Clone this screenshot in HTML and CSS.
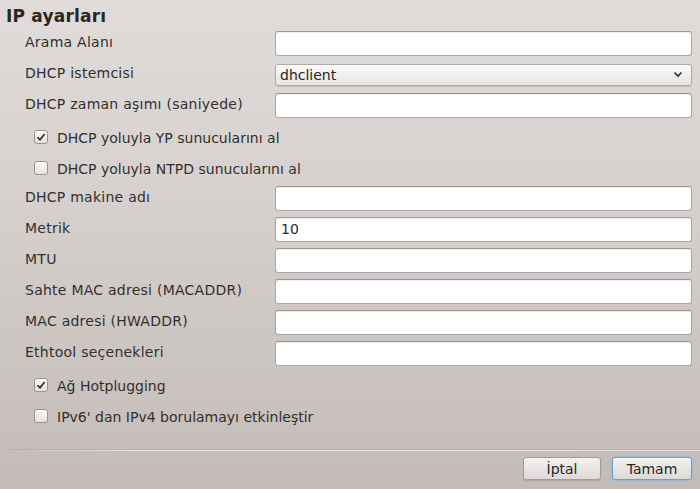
FILE: index.html
```html
<!DOCTYPE html>
<html lang="tr">
<head>
<meta charset="utf-8">
<title>IP ayarları</title>
<link rel="stylesheet" href="styles.css">
</head>
<body>
<div class="window">
  <h1 class="title">IP ayarları</h1>
  <div class="form">
    <div class="row"><span class="label">Arama Alanı</span><span class="field"></span></div>
    <div class="row"><span class="label">DHCP istemcisi</span>
      <span class="combo"><span class="combo-text">dhclient</span>
        <svg class="chev" width="10" height="7" viewBox="0 0 10 7"><path d="M1.5 1.5 L5 5 L8.5 1.5" fill="none" stroke="#2e2a28" stroke-width="1.6"/></svg>
      </span>
    </div>
    <div class="row"><span class="label">DHCP zaman aşımı (saniyede)</span><span class="field"></span></div>
    <div class="row check-row"><span class="box checked"><svg width="14" height="14" viewBox="0 0 14 14"><path d="M3.5 7.2 L6 9.8 L10.6 4" fill="none" stroke="#2b2725" stroke-width="1.6"/></svg></span><span class="check-label">DHCP yoluyla YP sunucularını al</span></div>
    <div class="row check-row"><span class="box"></span><span class="check-label">DHCP yoluyla NTPD sunucularını al</span></div>
    <div class="row"><span class="label">DHCP makine adı</span><span class="field"></span></div>
    <div class="row"><span class="label">Metrik</span><span class="field">10</span></div>
    <div class="row"><span class="label">MTU</span><span class="field"></span></div>
    <div class="row"><span class="label">Sahte MAC adresi (MACADDR)</span><span class="field"></span></div>
    <div class="row"><span class="label">MAC adresi (HWADDR)</span><span class="field"></span></div>
    <div class="row"><span class="label">Ethtool seçenekleri</span><span class="field"></span></div>
    <div class="row check-row"><span class="box checked"><svg width="14" height="14" viewBox="0 0 14 14"><path d="M3.5 7.2 L6 9.8 L10.6 4" fill="none" stroke="#2b2725" stroke-width="1.6"/></svg></span><span class="check-label">Ağ Hotplugging</span></div>
    <div class="row check-row"><span class="box"></span><span class="check-label">IPv6' dan IPv4 borulamayı etkinleştir</span></div>
  </div>
  <div class="sep"></div>
  <div class="buttons">
    <span class="btn">İptal</span>
    <span class="btn default">Tamam</span>
  </div>
</div>
</body>
</html>
```
FILE: styles.css
```css
html, body {
  margin: 0;
  padding: 0;
}
body {
  width: 700px;
  height: 489px;
  overflow: hidden;
  font-family: "DejaVu Sans", sans-serif;
  font-size: 14px;
  color: #332f2d;
  background: linear-gradient(to bottom, #dfdcda 0%, #d6d1ce 40%, #c3bbb8 100%);
}
.window {
  display: flex;
  flex-direction: column;
  height: 489px;
}
.title {
  margin: 0;
  height: 28px;
  box-sizing: border-box;
  padding: 5px 0 0 6px;
  font-size: 17px;
  font-weight: bold;
  line-height: 22px;
  letter-spacing: 0.2px;
  color: #2a2624;
}
.form {
  display: flex;
  flex-direction: column;
}
.row {
  height: 31px;
  display: grid;
  grid-template-columns: 250px 417px;
  align-items: center;
  padding-left: 25px;
}
.label {
  line-height: 16px;
  padding-bottom: 4px;
  white-space: nowrap;
  letter-spacing: 0.25px;
}
.field {
  height: 25px;
  box-sizing: border-box;
  background: #ffffff;
  border: 1px solid #aca6a2;
  border-top-color: #9c9692;
  border-radius: 3px;
  box-shadow: inset 0 1px 1px rgba(0,0,0,0.08);
  padding: 0 5px;
  line-height: 23px;
  color: #2a2624;
}
.combo {
  height: 22px;
  box-sizing: border-box;
  border: 1px solid #b0aaa6;
  border-radius: 3px;
  background: linear-gradient(to bottom, #fbfbfb, #e6e4e2);
  box-shadow: 0 1px 1px rgba(0,0,0,0.12);
  display: flex;
  align-items: center;
  justify-content: space-between;
  padding: 0 8px 0 4px;
  color: #2a2624;
}
.chev {
  display: block;
}
.check-row {
  display: flex;
  align-items: center;
  padding-left: 34px;
  gap: 9px;
}
.box {
  width: 14px;
  height: 14px;
  box-sizing: border-box;
  border: 1px solid #9a9490;
  border-radius: 3px;
  background: linear-gradient(to bottom, #fbfbfa, #e4e1df);
  display: flex;
  align-items: center;
  justify-content: center;
  overflow: hidden;
}
.box svg {
  display: block;
  flex: none;
}
.check-label {
  line-height: 16px;
  padding-top: 2px;
}
.sep {
  margin: 19px 0 0 10px;
  height: 1px;
  background: linear-gradient(to right, rgba(240,236,234,0) 0%, #ebe7e5 20%, #e2dedc 100%);
  box-shadow: 0 -1px 0 rgba(160,152,148,0.35);
}
.buttons {
  display: flex;
  justify-content: flex-end;
  gap: 11px;
  padding: 6px 8px 0 0;
}
.btn {
  height: 23px;
  box-sizing: border-box;
  border: 1px solid #a29c98;
  border-radius: 3px;
  background: linear-gradient(to bottom, #f3f2f1, #dcd9d7);
  box-shadow: 0 1px 1px rgba(0,0,0,0.12);
  display: flex;
  align-items: center;
  justify-content: center;
  width: 78px;
  color: #2a2624;
}
.btn.default {
  width: 80px;
  border-color: #5aa7dd;
  box-shadow: 0 0 0 1px rgba(120,190,235,0.5);
}
```
